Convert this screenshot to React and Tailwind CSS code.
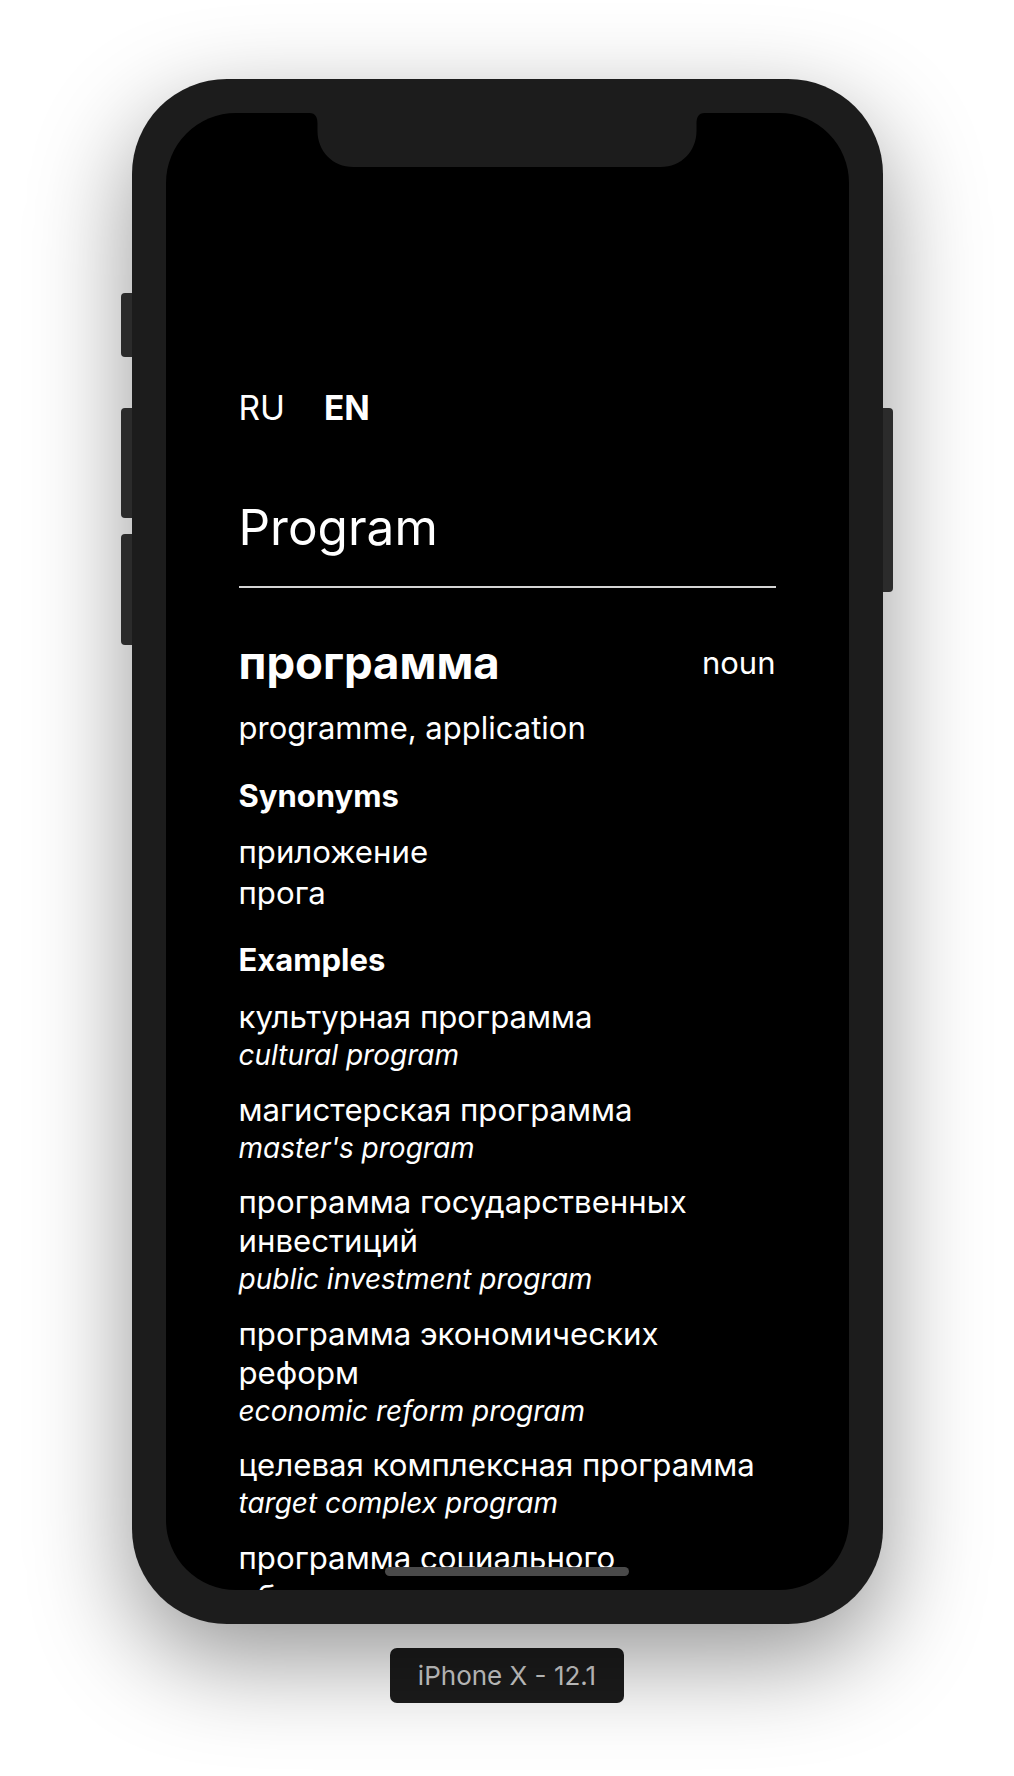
import React from "react";

const examples = [
  { ru: "культурная программа", en: "cultural program" },
  { ru: "магистерская программа", en: "master's program" },
  { ru: "программа государственных инвестиций", en: "public investment program" },
  { ru: "программа экономических реформ", en: "economic reform program" },
  { ru: "целевая комплексная программа", en: "target complex program" },
  { ru: "программа социального обеспечения", en: "social security program" },
];

export default function App() {
  return (
    <div className="min-h-[1776px] w-full bg-white flex flex-col items-center font-['Inter','Noto_Sans',sans-serif]">
      <div className="relative mt-[79px] w-[751px] h-[1545px] rounded-[95px] bg-[#1c1c1c] p-[34px] shadow-[0_35px_100px_rgba(0,0,0,0.42)]">
        {/* side buttons */}
        <div className="absolute left-[-11px] top-[214px] w-[11px] h-[64px] rounded-l-[4px] bg-[#2b2b2b]" />
        <div className="absolute left-[-11px] top-[329px] w-[11px] h-[110px] rounded-l-[4px] bg-[#2b2b2b]" />
        <div className="absolute left-[-11px] top-[455px] w-[11px] h-[111px] rounded-l-[4px] bg-[#2b2b2b]" />
        <div className="absolute right-[-10px] top-[329px] w-[10px] h-[184px] rounded-r-[4px] bg-[#2b2b2b]" />

        {/* screen */}
        <div className="relative w-full h-full rounded-[70px] bg-black overflow-hidden">
          <div className="flex flex-col px-[73px] pt-[275px] text-white">
            <div className="flex items-center text-[33.5px] leading-[40px]">
              <span className="font-normal">RU</span>
              <span className="ml-[39px] font-bold">EN</span>
            </div>
            <div className="mt-[69px] text-[49.5px] leading-[60px] font-normal">Program</div>
            <div className="mt-[29px] h-[2px] bg-[#d4d4d4]" />

            <div className="mt-[47px] flex items-center justify-between">
              <span className="text-[45.5px] leading-[56px] font-bold">программа</span>
              <span className="text-[31px] leading-[40px]">noun</span>
            </div>
            <div className="mt-[17px] text-[31px] leading-[40px]">programme, application</div>

            <div className="mt-[28px] text-[31px] leading-[40px] font-bold">Synonyms</div>
            <div className="mt-[16px] flex flex-col text-[31.2px] leading-[41px]">
              <span>приложение</span>
              <span>прога</span>
            </div>

            <div className="mt-[26px] text-[31px] leading-[40px] font-bold">Examples</div>
            <div className="mt-[18px] flex flex-col gap-[17.5px]">
              {examples.map((e) => (
                <div key={e.ru} className="flex flex-col">
                  <span className="text-[31.2px] leading-[39px]">{e.ru}</span>
                  <span className="text-[28px] leading-[36px] italic">{e.en}</span>
                </div>
              ))}
            </div>
          </div>

          {/* notch */}
          <svg
            className="absolute top-0 left-1/2 -translate-x-1/2"
            width="395"
            height="54"
            viewBox="0 0 395 54"
          >
            <path
              d="M0 0 H395 C389 0 387 4 387 11 V18 C387 38 372 54 351 54 H44 C23 54 8 38 8 18 V11 C8 4 6 0 0 0 Z"
              fill="#1c1c1c"
            />
          </svg>

          {/* home indicator */}
          <div className="absolute bottom-[14px] left-1/2 -translate-x-1/2 w-[244px] h-[9px] rounded-full bg-[#4a4a4a]" />
        </div>
      </div>

      <div className="mt-[24px] w-[234px] h-[55px] rounded-[7px] bg-[#1c1c1c] flex items-center justify-center text-[26px] text-[#d2d2d2] font-['Inter',sans-serif]">
        iPhone X - 12.1
      </div>
    </div>
  );
}
